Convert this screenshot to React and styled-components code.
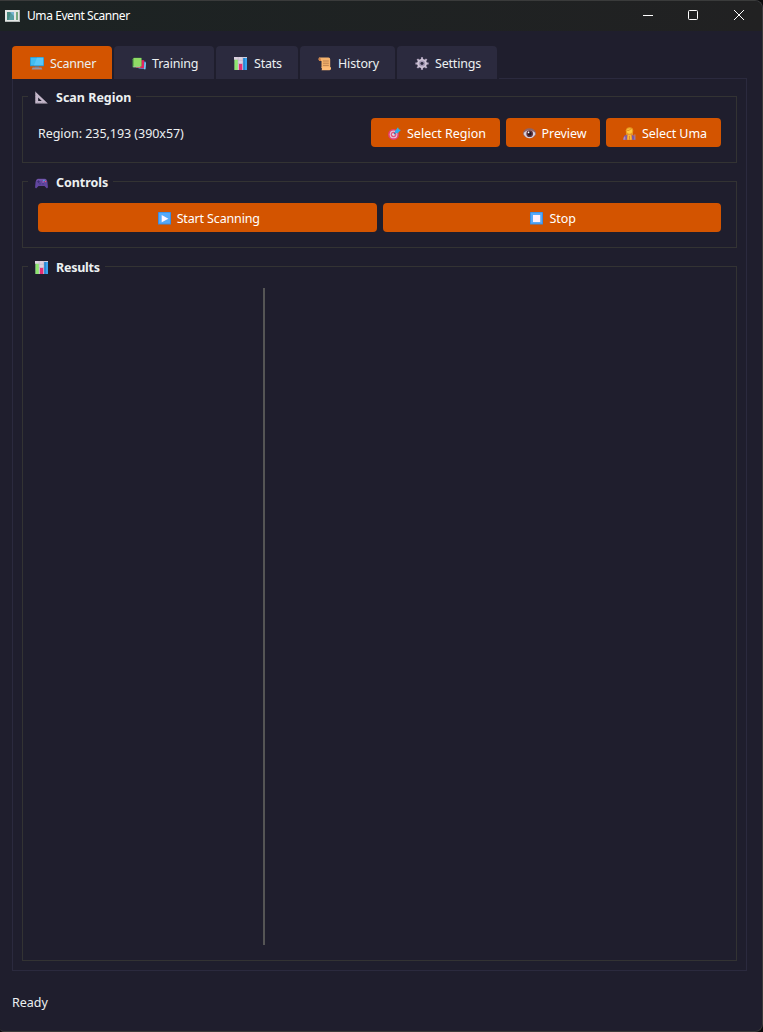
import React from 'react';
import styled, { createGlobalStyle } from 'styled-components';

const Global = createGlobalStyle`
  * { box-sizing: border-box; }
  html, body { margin: 0; background: #0b0b0d; overflow: hidden; }
  body { font-family: "Noto Sans", "Open Sans", sans-serif; font-size: 12.5px; color: #ecf0f1; }
`;

const Window = styled.div`
  width: 763px;
  height: 1032px;
  display: flex;
  flex-direction: column;
  background: #1f1e2d;
  border: 1px solid #3a3b3b;
  border-left: 0;
  border-radius: 0 8px 8px 4px;
  overflow: hidden;
`;
const TitleBar = styled.header`
  height: 30px;
  flex: none;
  display: flex;
  align-items: center;
  padding-left: 5px;
  background: linear-gradient(90deg, #1c2323, #212122);
`;
const Title = styled.div`
  flex: 1;
  margin-left: 7px;
  padding-bottom: 2px;
  font-size: 12px;
  color: #fff;
`;
const Caption = styled.button`
  width: ${p => p.$w || 46}px;
  height: 30px;
  padding: 0 0 2px;
  border: 0;
  background: none;
  display: flex;
  align-items: center;
  justify-content: center;
`;
const Body = styled.main`
  flex: 1;
  display: flex;
  flex-direction: column;
  padding: 15px 15px 0 12px;
`;
const TabBar = styled.nav`
  position: relative;
  align-self: flex-start;
  display: flex;
  gap: 2px;
  padding-right: 2px;
  margin-bottom: -1px;
  background: #1f1e2d;
`;
const Tab = styled.button`
  width: ${p => p.$w}px;
  height: 33px;
  padding: 2px 0 0 18px;
  display: flex;
  align-items: center;
  gap: 6px;
  border: 0;
  border-radius: 4px 4px 0 0;
  font: inherit;
  color: #ecf0f1;
  white-space: nowrap;
  background: ${p => (p.$active ? '#d35400' : '#2b2a3e')};
`;
const Label = styled.span`
  letter-spacing: ${p => p.$track || 0}px;
  white-space: nowrap;
`;
const Pane = styled.div`
  height: 893px;
  border: 1px solid #2b2a3e;
  padding: 17px 9px 9px;
  display: flex;
  flex-direction: column;
  gap: 18px;
`;
const Group = styled.section`
  height: ${p => p.$h}px;
  flex: none;
  border: 1px solid #333333;
  padding: 0 15px 15px;
  display: flex;
  flex-direction: column;
`;
const GroupTitle = styled.h2`
  align-self: flex-start;
  height: 21px;
  margin: -11px 0 1px -10px;
  padding: 1px 5px 0 7px;
  display: flex;
  align-items: center;
  gap: 8px;
  font-size: 12.5px;
  font-weight: 700;
  background: #1f1e2d;
  flex: none;
`;
const Row = styled.div`
  display: flex;
  align-items: center;
  gap: 6px;
  margin-top: 10px;
`;
const RegionText = styled.div`
  flex: 1;
  padding-top: 1px;
`;
const Button = styled.button`
  ${p => (p.$w ? `width: ${p.$w}px;` : 'flex: 1;')}
  height: 29px;
  padding: 1px 0 0 3px;
  display: flex;
  align-items: center;
  justify-content: center;
  gap: 6px;
  border: 0;
  border-radius: 4px;
  font: inherit;
  color: #fff;
  background: #d35400;
`;
const Splitter = styled.div`
  width: 2px;
  flex: 1;
  margin: 10px 0 0 225px;
  background: #555555;
`;
const Status = styled.footer`
  padding-top: 23px;
`;

const Svg = styled.svg`
  flex: none;
  display: block;
`;
const Pic = ({ children, w = 13, h = 13 }) => (
  <Svg width={w} height={h} viewBox="0 0 14 14" preserveAspectRatio="none">{children}</Svg>
);

const Monitor = () => (
  <Pic w={14}>
    <rect x="0" y="0" width="14" height="10" rx=".7" fill="#2f94c8" />
    <path d="M.8 .8h12.4v8.2H.8z" fill="#41bdf2" />
    <path d="M7 .8h6.2V9H4z" fill="#58c8fa" />
    <path d="M5 10h4v2H5z" fill="#74727e" />
    <path d="M2.6 11.3h8.8l1 2.2H1.6z" fill="#9b939f" />
  </Pic>
);
const Books = () => (
  <Pic w={14}>
    <path d="M7 4l6.8 1-.4 8.2L6.5 12.5z" fill="#35a5e8" />
    <path d="M12.9 6l.9.2-.5 7-1-.1z" fill="#a5d9fb" />
    <path d="M5 3l7.2.5-.3 9L4 11.5z" fill="#e3255f" />
    <path d="M.5 2.5l1.3-1.7h7.6v9L8.2 11H.5z" fill="#4c9d43" />
    <path d="M1.6 1h7.8v9H1.6z" fill="#8fdb65" />
    <path d="M1.3 10.2h7v.9h-7z" fill="#d8e7d3" />
  </Pic>
);
const Chart = () => (
  <Pic>
    <rect x="0" y="0" width="14" height="14" fill="#dcd1df" />
    <path d="M0 3.5h14M0 7h14M4.5 0v14M9.5 0v14" stroke="#b8aabd" strokeWidth=".5" />
    <rect x=".8" y="3" width="3.3" height="11" fill="#8ce66d" />
    <rect x="0" y="3" width="1" height="11" fill="#6a9d68" />
    <rect x="5.3" y="7.5" width="3.6" height="6.5" fill="#e52e72" />
    <rect x="10" y="1" width="4" height="13" fill="#38a4ee" />
    <path d="M10 1h1.6v13H10z" fill="#2680ca" />
  </Pic>
);
const Scroll = () => (
  <Pic w={14} h={14}>
    <path d="M1 .5h9.5q1.7 0 1.7 1.7V11H3.5V4H1.2Q0 2.2 1 .5z" fill="#f5b36d" />
    <path d="M1 .7q2-.4 2 3.3H1.2Q0 2 1 .7z" fill="#cd8149" />
    <path d="M3.5 10.3H13q.3 3-1.5 3h-8q1-1 0-3z" fill="#ffbd78" />
    <path d="M5 4h5.8M5 6.2h5.8M5 8.4h5.8" stroke="#b97d4d" strokeWidth=".9" />
  </Pic>
);
const Gear = () => (
  <Pic w={14}>
    <g stroke="#b9acc6" strokeWidth="2.1">
      <path d="M7 .4v13.2M.4 7h13.2M2.3 2.3l9.4 9.4M11.7 2.3l-9.4 9.4" />
    </g>
    <circle cx="7" cy="7" r="4.9" fill="#cfc5d6" />
    <circle cx="7" cy="7" r="3.2" fill="#a499b4" />
    <circle cx="7" cy="7" r="1.6" fill="#2b2a3e" />
  </Pic>
);
const Triangle = () => (
  <Pic>
    <path fillRule="evenodd" d="M.2.5L13.8 13.5H.2zM3.4 7v3.7h3.9z" fill="#c4b7ca" />
    <path d="M.6.8V13M2.2 12.9h10" stroke="#827988" strokeWidth=".7" strokeDasharray="1 .8" />
  </Pic>
);
const Gamepad = () => (
  <Pic>
    <path d="M3 3h8q2 .2 2.4 3.5l.5 5q0 2-1.4 1.8L10.2 10.8H3.8L1.5 13.3Q0 13.5.1 11.5l.5-5Q1 3.2 3 3z" fill="#61469e" />
    <path d="M3 3.3h8l1.5 1.8h-11z" fill="#7455ab" />
    <path d="M3.8 4.6v3M2.3 6.1h3" stroke="#3d2f74" strokeWidth=".9" />
    <circle cx="5.3" cy="8.4" r="1.1" fill="#4c4090" />
    <circle cx="8.7" cy="8.4" r="1.1" fill="#4c4090" />
    <circle cx="9.6" cy="4.9" r=".8" fill="#3fc2e8" />
    <circle cx="11.4" cy="6" r=".8" fill="#ed5673" />
    <circle cx="8.7" cy="6.4" r=".7" fill="#cf75d4" />
  </Pic>
);
const Target = () => (
  <Pic>
    <circle cx="6" cy="8" r="5.9" fill="#e73e70" />
    <circle cx="6" cy="8" r="4.2" fill="#e0c3d8" />
    <circle cx="6" cy="8" r="3" fill="#e0567f" />
    <circle cx="6" cy="8" r="1.5" fill="#f3e5ee" />
    <path d="M6.2 7.8L10.5 3.5" stroke="#416db4" strokeWidth="1.2" />
    <path d="M7.6 4.2L10.8 .4l.8 2 2.3.9-3.4 3.4-3-.2z" fill="#2eafed" />
  </Pic>
);
const Eye = () => (
  <Pic>
    <ellipse cx="7" cy="6.8" rx="6.9" ry="5.4" fill="#8d6468" />
    <path d="M.5 7.5Q2.5 3.6 7 3.6t6.5 3.9Q11 12 7 12T.5 7.5z" fill="#d9d0dc" />
    <circle cx="7.2" cy="7.2" r="3.6" fill="#60343c" />
    <circle cx="7.2" cy="7.2" r="2" fill="#211923" />
    <circle cx="6" cy="5.8" r=".9" fill="#fff" />
  </Pic>
);
const Uma = () => (
  <Pic>
    <path d="M3 3.4Q3.6.2 7.2.2T11 3.4l-.3 4.4L9.6 9.4H4.8L3.4 8z" fill="#e89b20" />
    <circle cx="7" cy="4.4" r="2.9" fill="#ffc83d" />
    <path d="M4.6 3.8Q7.6 3.8 8.6 1.8" stroke="#da821d" fill="none" />
    <path d="M2.7 8.6L5 7.8h4l2.2.8 1.4 5H1.2z" fill="#dd8442" />
    <path d="M1.3 9.3l2.8-1 .2 5.4H.2zM9.7 8.6l2.4 1 1.3 4.1H9.8z" fill="#7a58a6" />
    <path d="M1 10.6l1.5-.5v3.6H.2z" fill="#b58bb5" />
    <path d="M5.4 8.3h3.1l.9 5.4H4.7z" fill="#ffbc31" />
    <path d="M6.9 9.5v4.2" stroke="#c56a35" strokeWidth=".8" />
    <path d="M12.8 8v5.7" stroke="#a08fc8" strokeWidth=".9" />
  </Pic>
);
const Play = () => (
  <Pic>
    <rect width="14" height="13.5" rx=".6" fill="#3b8be0" />
    <rect x="1" y=".8" width="12" height="11.7" fill="#55a9f9" />
    <path d="M4 3.2l7.2 4L4 11z" fill="#fff5ff" />
  </Pic>
);
const StopIcon = () => (
  <Pic>
    <rect width="14" height="13.5" rx=".6" fill="#3b8be0" />
    <rect x="1" y=".8" width="12" height="11.7" fill="#55a9f9" />
    <rect x="3.2" y="3.2" width="7.8" height="7.6" fill="#fff0fb" />
  </Pic>
);
const AppIcon = () => (
  <Svg width="15" height="13" viewBox="0 0 15 13">
    <rect width="15" height="12" fill="#e4e7e5" />
    <path d="M0 11.5h15M14.5 0v12" stroke="#b4bab8" />
    <rect x="2" y="2" width="7" height="8" fill="#559ca0" />
    <path d="M2 2h4l-2.4 8H2z" fill="#478a80" />
    <path d="M5 2h4v4z" fill="#78b6d2" />
    <rect x="11" y="2" width="2" height="8" fill="#75a77d" />
  </Svg>
);

const Spaced = styled.span`
  padding-right: 1px;
`;
const StatsIcon = () => <Spaced><Chart /></Spaced>;

const tabs = [
  { name: 'Scanner', w: 100, track: -0.2, Icon: Monitor },
  { name: 'Training', w: 100, track: -0.2, Icon: Books },
  { name: 'Stats', w: 82, track: -0.2, Icon: StatsIcon },
  { name: 'History', w: 95, track: -0.15, Icon: Scroll },
  { name: 'Settings', w: 100, track: -0.2, Icon: Gear },
];

export default function App() {
  return (
    <>
      <Global />
      <Window>
        <TitleBar>
          <AppIcon />
          <Title><Label $track={-0.42}>Uma Event Scanner</Label></Title>
          <Caption $w={45} aria-label="Minimize">
            <Svg width="10" height="10"><path d="M0 5.5h10" stroke="#fff" /></Svg>
          </Caption>
          <Caption $w={45} aria-label="Maximize">
            <Svg width="10" height="10"><rect x=".5" y=".5" width="9" height="9" rx="1" fill="none" stroke="#fff" /></Svg>
          </Caption>
          <Caption $w={47} aria-label="Close">
            <Svg width="10" height="10"><path d="M0 0l10 10M10 0L0 10" stroke="#fff" /></Svg>
          </Caption>
        </TitleBar>
        <Body>
          <TabBar>
            {tabs.map(({ name, w, track, Icon }, i) => (
              <Tab key={name} $w={w} $active={i === 0}><Icon /><Label $track={track}>{name}</Label></Tab>
            ))}
          </TabBar>
          <Pane>
            <Group $h={67}>
              <GroupTitle><Triangle /><Label>Scan Region</Label></GroupTitle>
              <Row>
                <RegionText><Label $track={-0.05}>Region: 235,193 (390x57)</Label></RegionText>
                <Button $w={129}><Target /><Label>Select Region</Label></Button>
                <Button $w={94}><Eye /><Label $track={-0.1}>Preview</Label></Button>
                <Button $w={115}><Uma /><Label $track={-0.1}>Select Uma</Label></Button>
              </Row>
            </Group>
            <Group $h={67}>
              <GroupTitle><Gamepad /><Label $track={-0.05}>Controls</Label></GroupTitle>
              <Row>
                <Button><Play /><Label $track={-0.15}>Start Scanning</Label></Button>
                <Button><StopIcon /><Label>Stop</Label></Button>
              </Row>
            </Group>
            <Group $h={695}>
              <GroupTitle><Chart /><Label $track={-0.25}>Results</Label></GroupTitle>
              <Splitter />
            </Group>
          </Pane>
          <Status><Label>Ready</Label></Status>
        </Body>
      </Window>
    </>
  );
}
